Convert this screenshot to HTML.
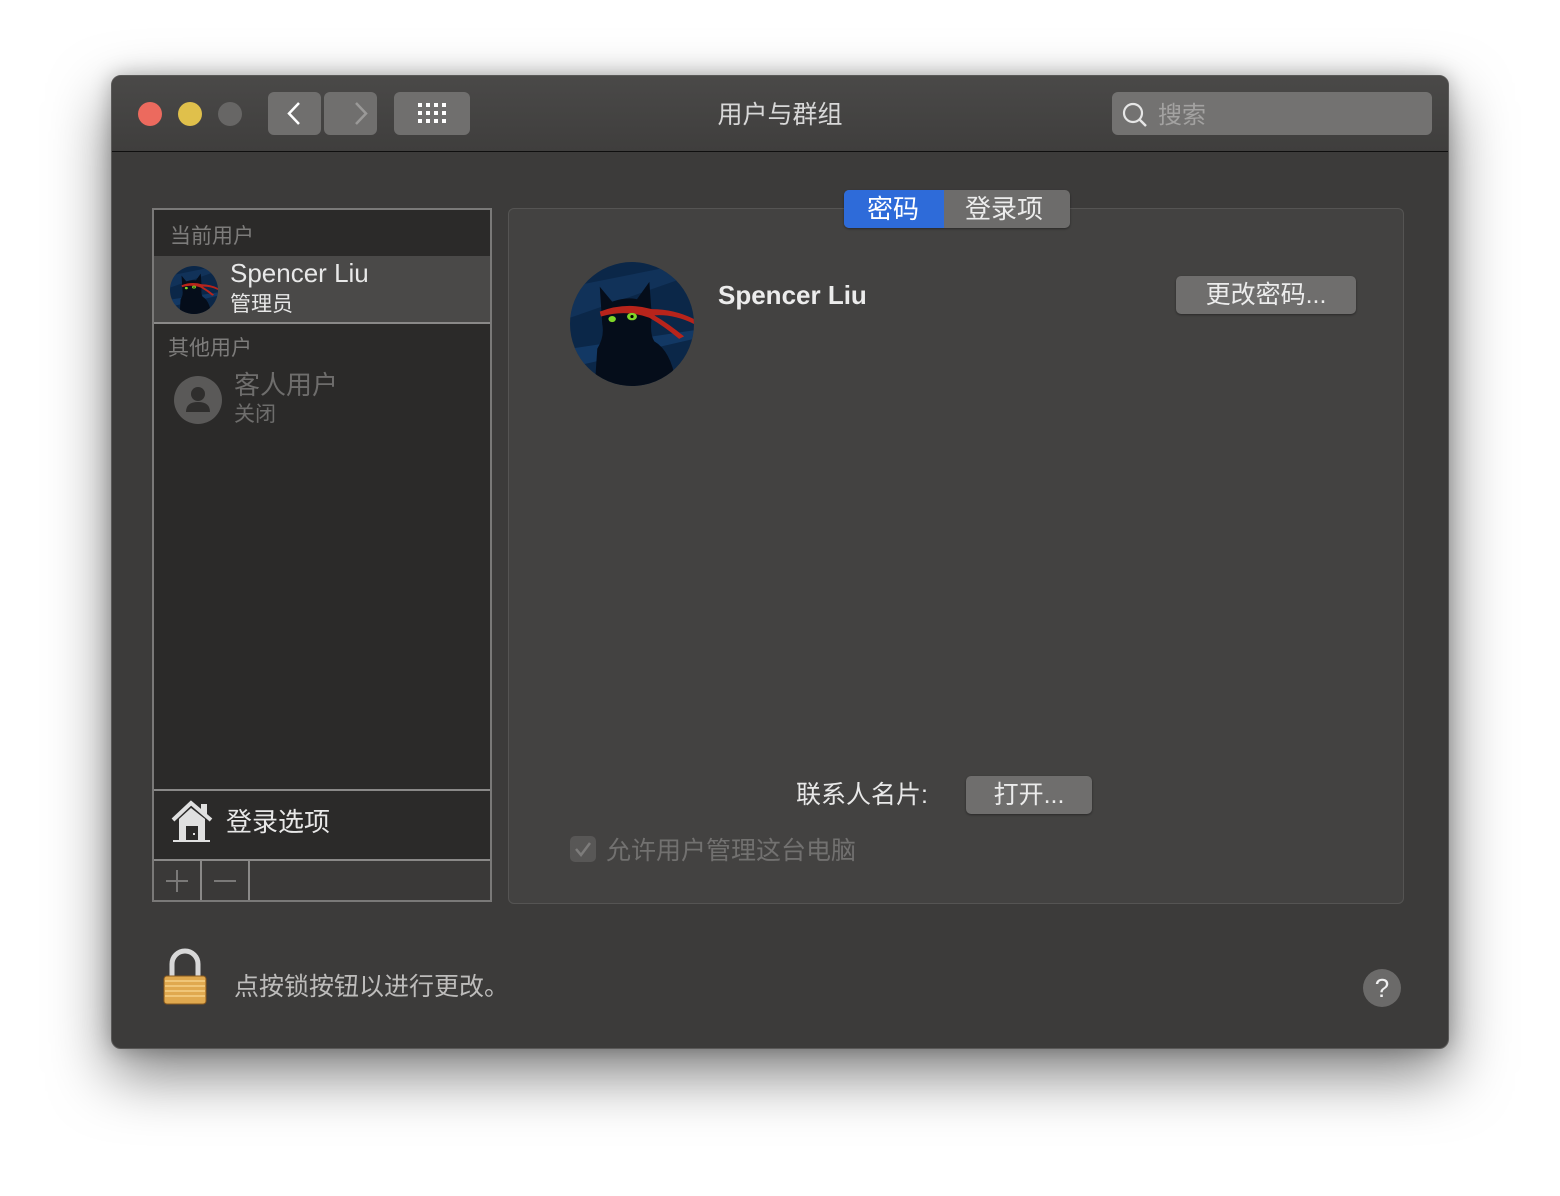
<!DOCTYPE html>
<html><head><meta charset="utf-8"><style>
*{margin:0;padding:0;box-sizing:border-box}
body{width:1560px;height:1196px;background:#fff;position:relative;overflow:hidden;font-family:"Liberation Sans","Noto Sans CJK SC",sans-serif}
.a{position:absolute}
.win{left:111px;top:75px;width:1338px;height:974px;background:#3c3b3a;border-radius:10px;border:1px solid #5a5958;box-shadow:0 25px 60px rgba(0,0,0,.5),0 0 20px rgba(0,0,0,.25);overflow:hidden}
.tb{left:0;top:0;width:1336px;height:76px;background:linear-gradient(#4a4948,#3f3e3d);border-bottom:1px solid #0f0f0f}
.dot{width:24px;height:24px;border-radius:50%;top:26px}
.btn{background:#706f6e;border-radius:6px}
.t{white-space:nowrap}
</style></head><body>
<div class="a win">
 <div class="a tb">
  <div class="a dot" style="left:26px;background:#ec6a5e"></div>
  <div class="a dot" style="left:66px;background:#e0c04b"></div>
  <div class="a dot" style="left:106px;background:#676665"></div>
  <div class="a btn" style="left:156px;top:16px;width:53px;height:43px"></div>
  <div class="a btn" style="left:212px;top:16px;width:53px;height:43px"></div>
  <svg class="a" style="left:156px;top:16px" width="110" height="43"><path d="M31 11 L21 21.5 L31 32" stroke="#fff" stroke-width="2.5" fill="none"/><path d="M88 11 L98 21.5 L88 32" stroke="#9a9998" stroke-width="2.5" fill="none"/></svg>
  <div class="a btn" style="left:282px;top:16px;width:76px;height:43px"></div>
  <svg class="a" style="left:282px;top:16px" width="76" height="43"><g fill="#fff">
   <rect x="24" y="11" width="4" height="4"/><rect x="32" y="11" width="4" height="4"/><rect x="40" y="11" width="4" height="4"/><rect x="48" y="11" width="4" height="4"/>
   <rect x="24" y="19" width="4" height="4"/><rect x="32" y="19" width="4" height="4"/><rect x="40" y="19" width="4" height="4"/><rect x="48" y="19" width="4" height="4"/>
   <rect x="24" y="27" width="4" height="4"/><rect x="32" y="27" width="4" height="4"/><rect x="40" y="27" width="4" height="4"/><rect x="48" y="27" width="4" height="4"/></g></svg>
  <div class="a t" style="left:0;width:1336px;top:19px;text-align:center;color:#d8d8d8;font-size:25px">用户与群组</div>
  <div class="a" style="left:1000px;top:16px;width:320px;height:43px;background:#737271;border-radius:6px"></div>
  <svg class="a" style="left:1008px;top:24px" width="30" height="30"><circle cx="13" cy="13" r="9" stroke="#e6e6e6" stroke-width="2.2" fill="none"/><path d="M19.5 19.5 L26 26" stroke="#e6e6e6" stroke-width="2.4"/></svg>
  <div class="a t" style="left:1046px;top:19px;color:#a3a2a1;font-size:24px">搜索</div>
 </div>

 <div class="a" style="left:40px;top:132px;width:340px;height:694px;border:2px solid #7a7978;background:#2b2a29"></div>
 <div class="a t" style="left:58px;top:144px;color:#7d7c7b;font-size:21px">当前用户</div>
 <div class="a" style="left:42px;top:180px;width:336px;height:68px;background:#4a4948;border-bottom:2px solid #8a8988"></div>
 <svg class="a" style="left:58px;top:190px" width="48" height="48" viewBox="0 0 100 100"><use href="#av"/></svg>
 <div class="a t" style="left:118px;top:182px;color:#e8e8e8;font-size:26px">Spencer Liu</div>
 <div class="a t" style="left:118px;top:212px;color:#e8e8e8;font-size:21px">管理员</div>
 <div class="a t" style="left:56px;top:256px;color:#7d7c7b;font-size:21px">其他用户</div>
 <svg class="a" style="left:62px;top:300px" width="48" height="48"><circle cx="24" cy="24" r="24" fill="#5a5958"/><circle cx="24" cy="18" r="7" fill="#2f2e2d"/><path d="M12 36 Q12 26 24 26 Q36 26 36 36 Z" fill="#2f2e2d"/></svg>
 <div class="a t" style="left:122px;top:289px;color:#6e6d6c;font-size:26px">客人用户</div>
 <div class="a t" style="left:122px;top:322px;color:#6e6d6c;font-size:21px">关闭</div>
 <div class="a" style="left:42px;top:713px;width:336px;height:2px;background:#8a8988"></div>
 <svg class="a" style="left:58px;top:724px" width="44" height="44"><path d="M3 20 L21 3 L41 20" stroke="#e0e0e0" stroke-width="4" fill="none"/><rect x="31" y="4" width="6" height="10" fill="#e0e0e0"/><path d="M9 19 L21 8 L35 19 L35 40 L9 40Z" fill="#e0e0e0"/><rect x="16" y="26" width="12" height="14" fill="#2b2a29"/><rect x="23" y="33" width="2" height="2" fill="#e0e0e0"/><rect x="3" y="40" width="37" height="2" fill="#e0e0e0"/></svg>
 <div class="a t" style="left:114px;top:726px;color:#e8e8e8;font-size:26px">登录选项</div>
 <div class="a" style="left:42px;top:783px;width:336px;height:41px;background:#3a3938;border-top:2px solid #8a8988"></div>
 <div class="a" style="left:88px;top:785px;width:2px;height:39px;background:#8a8988"></div>
 <div class="a" style="left:136px;top:785px;width:2px;height:39px;background:#8a8988"></div>
 <div class="a" style="left:54px;top:804px;width:22px;height:1.5px;background:#7a7978"></div>
 <div class="a" style="left:64px;top:794px;width:1.5px;height:22px;background:#7a7978"></div>
 <div class="a" style="left:102px;top:804px;width:22px;height:1.5px;background:#7a7978"></div>

 <div class="a" style="left:396px;top:132px;width:896px;height:696px;border:1px solid #555453;border-radius:6px;background:#434241"></div>
 <div class="a" style="left:732px;top:114px;width:226px;height:38px;border-radius:5px;background:#6d6c6b;overflow:hidden;box-shadow:0 1px 2px rgba(0,0,0,.4)"><div style="width:100px;height:38px;background:#2e6bd9"></div></div>
 <div class="a t" style="left:755px;top:113px;color:#fff;font-size:26px">密码</div>
 <div class="a t" style="left:853px;top:113px;color:#ececec;font-size:26px">登录项</div>
 <svg class="a" style="left:458px;top:186px" width="124" height="124" viewBox="0 0 100 100"><defs><g id="av"><clipPath id="c"><circle cx="50" cy="50" r="50"/></clipPath><g clip-path="url(#c)"><rect width="100" height="100" fill="#0b2748"/><path d="M0 20 L100 0 L100 10 L0 45Z" fill="#153a66" opacity=".6"/><path d="M0 70 L100 55 L100 62 L0 85Z" fill="#1a4a80" opacity=".5"/><path d="M20 100 L22 70 Q28 60 26 50 L24 20 L34 32 Q45 28 54 30 L64 16 L66 44 Q64 58 68 64 Q82 72 86 100Z" fill="#050d1a"/><path d="M24 40 Q45 32 66 38 Q84 38 100 46 L100 50 Q84 42 68 43 Q80 50 92 60 L88 62 Q76 52 64 45 Q45 38 25 44Z" fill="#b8241b"/><ellipse cx="34" cy="46" rx="3" ry="2.5" fill="#7fd628"/><ellipse cx="50" cy="44" rx="4" ry="3" fill="#7fd628"/><circle cx="50" cy="44" r="1.3" fill="#000"/></g></g></defs><use href="#av"/></svg>
 <div class="a t" style="left:606px;top:204px;color:#ececec;font-size:26px;font-weight:bold">Spencer Liu</div>
 <div class="a" style="left:1064px;top:200px;width:180px;height:38px;background:#6f6e6d;border-radius:5px;box-shadow:0 1px 2px rgba(0,0,0,.4)"></div>
 <div class="a t" style="left:1064px;top:199px;width:180px;text-align:center;color:#ececec;font-size:25px">更改密码...</div>
 <div class="a t" style="left:684px;top:699px;color:#e8e8e8;font-size:25px">联系人名片:</div>
 <div class="a" style="left:854px;top:700px;width:126px;height:38px;background:#6f6e6d;border-radius:5px;box-shadow:0 1px 2px rgba(0,0,0,.4)"></div>
 <div class="a t" style="left:854px;top:699px;width:126px;text-align:center;color:#ececec;font-size:25px">打开...</div>
 <div class="a" style="left:458px;top:760px;width:26px;height:26px;background:#585756;border-radius:5px"></div>
 <svg class="a" style="left:458px;top:760px" width="26" height="26"><path d="M6 13 L11 19 L20 7" stroke="#7d7c7b" stroke-width="2.5" fill="none"/></svg>
 <div class="a t" style="left:494px;top:755px;color:#727170;font-size:25px">允许用户管理这台电脑</div>

 <svg class="a" style="left:50px;top:870px" width="46" height="62"><path d="M10 30 V18 A13 13 0 0 1 36 18 V30" stroke="#d8d8d8" stroke-width="5" fill="none"/><rect x="2" y="30" width="42" height="28" rx="3" fill="#e0a94f" stroke="#8a5a1e" stroke-width="1"/><g stroke="#f5cf85" stroke-width="1.5"><path d="M3 35H43M3 40H43M3 45H43M3 50H43"/></g></svg>
 <div class="a t" style="left:122px;top:891px;color:#bdbcbb;font-size:25px">点按锁按钮以进行更改。</div>
 <div class="a" style="left:1251px;top:893px;width:38px;height:38px;border-radius:50%;background:#6b6a69;color:#f0f0f0;font-size:26px;text-align:center;line-height:38px">?</div>
</div>
</body></html>
